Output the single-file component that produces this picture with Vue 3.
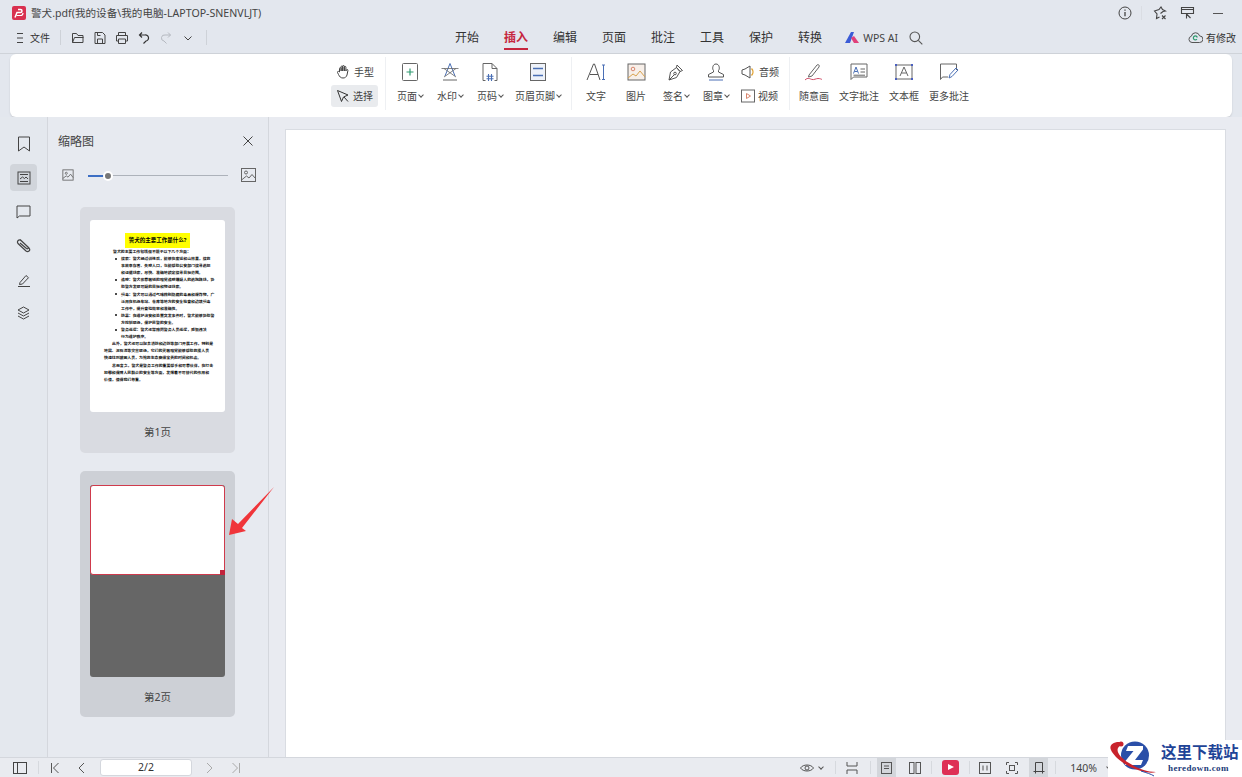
<template>
  <div class="app">
    <!-- 标题栏 -->
    <header class="title-bar">
      <svg class="logo" width="14" height="14" viewBox="0 0 14 14">
        <rect width="14" height="14" rx="2" fill="#d9304f" />
        <path d="M3 11.500L5 6.500h3.500a1.500 1.500 0 0 0 0-3H6" fill="none" stroke="#fff" stroke-width="1.500" />
        <path d="M4.500 9.500h4A2.500 2.500 0 0 0 11 7" fill="none" stroke="#fff" stroke-width="1.200" />
      </svg>
      <span class="file-name">警犬.pdf(我的设备\我的电脑-LAPTOP-SNENVLJT)</span>
      <div class="win-btns">
        <svg width="14" height="14" viewBox="0 0 14 14" fill="none" stroke="#444" stroke-width="1">
          <circle cx="7" cy="7" r="6" />
          <path d="M7 6v4.200M7 3.600v1.200" stroke-width="1.300" />
        </svg>
        <i class="win-sep"></i>
        <svg width="14" height="14" viewBox="0 0 14 14" fill="none" stroke="#444" stroke-width="1.100">
          <path d="M7.500 7.500L10 5.500 12.500 5 9.500 3.500 8 1 6 3.500 1.500 5l2.500 3-.5 4.500 3-1.500" />
          <path d="M9 9.500l3.500 3.500M12.500 9.500L9 13" />
        </svg>
        <svg width="15" height="14" viewBox="0 0 15 14" fill="none" stroke="#444" stroke-width="1.100">
          <path d="M1.500 1.500h12v6h-12zM1.500 3.500h12M6.500 7.500v5M6.500 8l4 4" />
        </svg>
        <svg class="win-min" width="12" height="14" viewBox="0 0 12 14" fill="none" stroke="#555">
          <path d="M1 7.500h10" />
        </svg>
      </div>
    </header>

    <!-- 菜单栏 -->
    <nav class="menu-bar">
      <div class="quick">
        <svg width="8" height="12" viewBox="0 0 8 12" fill="none" stroke="#444"><path d="M1 1.500h6M1 6h6M1 10.500h6" /></svg>
        <span class="file-menu">文件</span>
        <i class="quick-sep"></i>
        <div class="quick-icons">
          <svg width="14" height="14" viewBox="0 0 14 14" fill="none" stroke="#444"><path d="M1.500 11.500v-9h4l1.500 2h5v7zM1.500 11.500l2-5h9" /></svg>
          <svg width="14" height="14" viewBox="0 0 14 14" fill="none" stroke="#444"><path d="M2 1.500h7.500l2.500 2.500v8.500H2zM4.500 12.500V8h5v4.500M4.500 1.500V4.500h3" /></svg>
          <svg width="14" height="14" viewBox="0 0 14 14" fill="none" stroke="#444"><path d="M3.500 4.500v-3h7v3M3.500 10H1.500V4.500h11V10h-2M3.500 8h7v4.500h-7z" /></svg>
          <svg width="14" height="14" viewBox="0 0 14 14" fill="none" stroke="#333" stroke-width="1.200"><path d="M5 1.500L2.500 4 5 6.500M2.500 4H8a3 3 0 0 1 1 6L6.500 12.500" /></svg>
          <svg width="14" height="14" viewBox="0 0 14 14" fill="none" stroke="#b5b9c0"><path d="M9 1.500L11.500 4 9 6.500M11.500 4H6a3 3 0 0 0-1 6l2.500 2.500" /></svg>
          <svg width="14" height="14" viewBox="0 0 14 14" fill="none" stroke="#444"><path d="M3.500 5.500L7 9l3.500-3.500" /></svg>
        </div>
        <i class="quick-sep last"></i>
      </div>
      <div class="tabs">
        <span v-for="t in tabs" :key="t" :class="['tab', { active: t === '插入' }]">{{ t }}</span>
        <span class="wps-ai">
          <svg width="15" height="11" viewBox="0 0 15 11">
            <path d="M0 11L6 0h3L5 11z" fill="#3b5bd6" />
            <path d="M6 6l3-2 5 7H9z" fill="#e0407a" />
          </svg>
          WPS AI
        </span>
        <svg class="search" width="14" height="14" viewBox="0 0 14 14" fill="none" stroke="#555" stroke-width="1.100">
          <circle cx="5.800" cy="5.800" r="4.800" /><path d="M9.300 9.300L13.300 13.300" />
        </svg>
      </div>
      <div class="modified">
        <svg width="15" height="13" viewBox="0 0 15 13" fill="none" stroke="#555">
          <path d="M4 11.500a3.200 3.200 0 0 1-.6-6.300 4.200 4.200 0 0 1 8.200-.3 3.300 3.300 0 0 1 0 6.600z" />
          <path d="M9.300 6.500a2 2 0 1 0-.4 1.700" stroke="#2f9a70" stroke-width="1.200" />
        </svg>
        有修改
      </div>
    </nav>

    <!-- 功能区 -->
    <section class="ribbon">
      <div class="group mode-group">
        <div class="mode">
          <svg width="15" height="15" viewBox="0 0 15 15" fill="none" stroke="#444"><path d="M3.500 8V4.500a.8.8 0 0 1 1.600 0V7V2.800a.8.8 0 0 1 1.600 0V7V2.300a.8.8 0 0 1 1.600 0V7V3.200a.8.8 0 0 1 1.600 0V7l.5-1a.8.8 0 0 1 1.500.6L11 11c-.6 2-2 3-4 3-2.500 0-3.500-1.500-4.500-3.500L1.500 8.500a.8.8 0 0 1 1.300-.9z" /></svg>
          手型
        </div>
        <div class="mode on">
          <svg width="14" height="14" viewBox="0 0 14 14" fill="none" stroke="#333"><path d="M1.500 1.500l4 11 2-4.500 4.500-2zM8 8l4 4.500" /></svg>
          选择
        </div>
      </div>

      <div class="group">
        <div class="tool">
          <svg width="18" height="20" viewBox="0 0 18 20" fill="none" stroke="#666">
            <rect x="1.500" y="1.500" width="15" height="17" rx="1" />
            <path d="M5.500 10h7M9 6.500v7" stroke="#2f9a70" stroke-width="1.200" />
          </svg>
          <span>页面<b class="caret"></b></span>
        </div>
        <div class="tool">
          <svg width="20" height="20" viewBox="0 0 20 20" fill="none" stroke="#4a6fb5">
            <path d="M5 14L10 1.500 15 14" />
            <path d="M1.500 6.500h17M4 15l12-8.500M4 6.500L16 15" stroke="#666" stroke-width=".800" />
            <path d="M3 18h14" stroke="#666" />
          </svg>
          <span>水印<b class="caret"></b></span>
        </div>
        <div class="tool">
          <svg width="18" height="20" viewBox="0 0 18 20" fill="none" stroke="#666">
            <path d="M4.500 18.500H2v-17h9l5 5v12h-2.500M11 1.500v5h5" />
            <path d="M7.500 12v7M10.500 12v7M5.500 14.200h7M5.500 16.800h7" stroke="#4a6fb5" stroke-width="1.100" />
          </svg>
          <span>页码<b class="caret"></b></span>
        </div>
        <div class="tool">
          <svg width="18" height="20" viewBox="0 0 18 20" fill="#eef2f9" stroke="#666">
            <rect x="1.500" y="1.500" width="15" height="17" />
            <path d="M4 6.500h10M4 13.500h10" stroke="#4a6fb5" stroke-width="1.500" />
          </svg>
          <span>页眉页脚<b class="caret"></b></span>
        </div>
      </div>

      <div class="group">
        <div class="tool">
          <svg width="20" height="20" viewBox="0 0 20 20" fill="none" stroke="#555">
            <path d="M1 18L7.500 2h1L14 18M4 12.500h8" />
            <path d="M16 3h3M16 17.500h3M17.500 3v14.500" stroke="#4a6fb5" />
          </svg>
          <span>文字</span>
        </div>
        <div class="tool">
          <svg width="19" height="18" viewBox="0 0 19 18" fill="#f7efe9" stroke="#666">
            <rect x="1" y="1" width="17" height="16" />
            <circle cx="6" cy="6" r="1.800" stroke="#d8866e" />
            <path d="M1 15l5-4 3 2 4-5 5 6" fill="none" stroke="#d8a24e" />
          </svg>
          <span>图片</span>
        </div>
        <div class="tool">
          <svg width="18" height="20" viewBox="0 0 18 20" fill="none" stroke="#555">
            <path d="M2 18l1.500-8L9.500 5.500l3.500 4L9.500 15.500zM2 18l5-5M10 3l5.500 5.500-2.500 1-3.500-4z" />
            <circle cx="8" cy="11.500" r="1.300" />
          </svg>
          <span>签名<b class="caret"></b></span>
        </div>
        <div class="tool">
          <svg width="18" height="20" viewBox="0 0 18 20" fill="none" stroke="#555">
            <path d="M6.500 10V8.500C5 7 5.500 2 9 2s4 5 2.500 6.500V10l5 2.500V15h-15v-2.500z" />
            <path d="M2 18h14" stroke="#4a6fb5" />
          </svg>
          <span>图章<b class="caret"></b></span>
        </div>
        <div class="media">
          <div class="media-row">
            <svg width="15" height="14" viewBox="0 0 15 14" fill="none" stroke="#555">
              <path d="M1 5l3-1 5-3v12L4 10 1 9z" />
              <path d="M10.500 3.500a5 5 0 0 1 0 7" stroke="#e0a030" stroke-width="1.400" />
            </svg>
            音频
          </div>
          <div class="media-row">
            <svg width="14" height="14" viewBox="0 0 14 14" fill="none" stroke="#666">
              <rect x=".5" y="1" width="13" height="12" />
              <path d="M5.500 4.500l4 2.500-4 2.500z" stroke="#d8866e" />
            </svg>
            视频
          </div>
        </div>
      </div>

      <div class="group">
        <div class="tool">
          <svg width="20" height="20" viewBox="0 0 20 20" fill="none" stroke="#666">
            <path d="M5 13L13 3c1-1 3 0 2 2L8 14l-3.500 1z" />
            <path d="M1 18c3-3 5-1 7-.5s4-1 6-1 3 .5 4 1" stroke="#d0506a" />
          </svg>
          <span>随意画</span>
        </div>
        <div class="tool">
          <svg width="18" height="18" viewBox="0 0 18 18" fill="none" stroke="#666">
            <path d="M1 1h16v13H3.500L1 16.500z" />
            <path d="M3.500 10.500L6 4l2.500 6.500M4.500 8.500h3" stroke="#4a6fb5" />
            <path d="M10.500 6H15M10.500 9H15M3.500 12.200H15" />
          </svg>
          <span>文字批注</span>
        </div>
        <div class="tool">
          <svg width="20" height="18" viewBox="0 0 20 18" fill="none" stroke="#666">
            <rect x="2" y="2" width="16" height="14" />
            <path d="M6 13L10 4l4 9M7.500 10h5" />
            <path d="M2 1v2M18 1v2M2 15v2M18 15v2" stroke="#4a5fc0" stroke-width="2" />
          </svg>
          <span>文本框</span>
        </div>
        <div class="tool">
          <svg width="20" height="18" viewBox="0 0 20 18" fill="none" stroke="#666">
            <path d="M9 14H3.500L1.500 16.500V1h16v6" />
            <path d="M10 15l1-3.500 6-6.500 2 2-6 6.500z" stroke="#4a6fb5" />
          </svg>
          <span>更多批注</span>
        </div>
      </div>
    </section>

    <main class="main">
      <!-- 左侧竖排 -->
      <aside class="rail">
        <div class="rail-btn">
          <svg width="14" height="16" viewBox="0 0 14 16" fill="none" stroke="#444"><path d="M1.500 1h11v14L7 11l-5.500 4z" /></svg>
        </div>
        <div class="rail-btn on">
          <svg width="14" height="14" viewBox="0 0 14 14" fill="none" stroke="#444">
            <rect x="1" y="1" width="12" height="12" />
            <path d="M3 3.500h8M3 10.500h8M3 8l2.500-2 2 1.500L9 6l2 2" />
          </svg>
        </div>
        <div class="rail-btn">
          <svg width="15" height="14" viewBox="0 0 15 14" fill="none" stroke="#444"><path d="M1 1h13v10H3.500L1 13z" /></svg>
        </div>
        <div class="rail-btn">
          <svg width="15" height="15" viewBox="0 0 15 15" fill="none" stroke="#444" stroke-width="1.200"><path d="M4 1.500l9 8.500c2 2.500-1 4.500-3 3L2 5.500C.5 3.500 3 .5 5 2.500l7 6.500c1 1.200-.5 2.200-1.500 1.500L4 5" /></svg>
        </div>
        <div class="rail-btn">
          <svg width="14" height="14" viewBox="0 0 14 14" fill="none" stroke="#444"><path d="M3 9.500L9 2.500l2.500 2.200L5.500 11l-3 .5zM1 13.500h12" /></svg>
        </div>
        <div class="rail-btn">
          <svg width="13" height="15" viewBox="0 0 13 15" fill="none" stroke="#444"><path d="M6.500 1L12 4 6.500 7 1 4zM1 7l5.500 3L12 7M1 10l5.500 3L12 10" /></svg>
        </div>
      </aside>

      <!-- 缩略图面板 -->
      <aside class="panel">
        <div class="panel-head">
          <span>缩略图</span>
          <svg width="10" height="10" viewBox="0 0 10 10" fill="none" stroke="#444"><path d="M.5.5l9 9M9.500.5l-9 9" /></svg>
        </div>
        <div class="zoom-row">
          <svg width="12" height="12" viewBox="0 0 14 14" fill="none" stroke="#666">
            <rect x="1" y="1" width="12" height="12" /><circle cx="5" cy="5" r="1.200" /><path d="M1 11l4-3 2 1.500L10 6l3 4" />
          </svg>
          <div class="track">
            <div class="track-fill"></div>
            <div class="knob"></div>
          </div>
          <svg width="15" height="14" viewBox="0 0 15 14" fill="none" stroke="#666">
            <rect x=".5" y=".5" width="14" height="13" /><circle cx="5" cy="4.500" r="1.500" /><path d="M.5 12l5-4 2.500 2 3-3.500 3.500 4" />
          </svg>
        </div>

        <div class="thumb">
          <div class="sheet">
            <div class="doc-title"><mark>警犬的主要工作是什么?</mark></div>
            <p v-for="(l, i) in docLines" :key="i" :class="['doc-line', l.k]">{{ l.t }}</p>
          </div>
          <div class="thumb-label">第1页</div>
        </div>

        <div class="thumb current">
          <div class="sheet blank">
            <div class="viewport"><i class="grip"></i></div>
          </div>
          <div class="thumb-label">第2页</div>
        </div>
      </aside>

      <!-- 文档区 -->
      <div class="doc-area">
        <div class="page"></div>
      </div>

      <!-- 标注箭头 -->
      <svg class="arrow" width="50" height="50" viewBox="0 0 50 50">
        <path d="M1 49L4 33l6 5 36-37-32 41 4 3z" fill="#f0353a" />
      </svg>
    </main>

    <!-- 状态栏 -->
    <footer class="status">
      <div class="st-left">
        <svg width="14" height="12" viewBox="0 0 14 12" fill="none" stroke="#444"><rect x=".5" y=".5" width="13" height="11" /><path d="M4.500 .5v11" /></svg>
        <i class="st-sep"></i>
        <svg class="pg-first" width="10" height="12" viewBox="0 0 10 12" fill="none" stroke="#555"><path d="M1.500 1v10M8.500 1l-5 5 5 5" /></svg>
        <svg class="pg-prev" width="7" height="12" viewBox="0 0 7 12" fill="none" stroke="#555"><path d="M6 1L1 6l5 5" /></svg>
        <div class="pg-input">2/2</div>
        <svg class="pg-next" width="7" height="12" viewBox="0 0 7 12" fill="none" stroke="#aaa"><path d="M1 1l5 5-5 5" /></svg>
        <svg class="pg-last" width="10" height="12" viewBox="0 0 10 12" fill="none" stroke="#aaa"><path d="M8.500 1v10M1.500 1l5 5-5 5" /></svg>
      </div>
      <div class="st-right">
        <svg width="14" height="10" viewBox="0 0 14 10" fill="none" stroke="#555"><path d="M.5 5C3 1 11 1 13.500 5 11 9 3 9 .5 5z" /><circle cx="7" cy="5" r="2" /></svg>
        <b class="caret dark"></b>
        <i class="st-sep fit-l"></i>
        <svg width="12" height="14" viewBox="0 0 12 14" fill="none" stroke="#555"><path d="M1 1v4h10V1M1 13V9h10v4" /></svg>
        <i class="st-sep fit-r"></i>
        <span class="st-btn on"><svg width="11" height="12" viewBox="0 0 11 12" fill="none" stroke="#555"><rect x=".5" y=".5" width="10" height="11" /><path d="M3 4h5M3 6.500h5" /></svg></span>
        <span class="st-btn two"><svg width="12" height="12" viewBox="0 0 12 12" fill="none" stroke="#555"><rect x=".5" y=".5" width="4.500" height="11" /><rect x="7" y=".5" width="4.500" height="11" /></svg></span>
        <i class="st-sep"></i>
        <span class="play"></span>
        <i class="st-sep after-play"></i>
        <span class="st-btn"><svg width="12" height="12" viewBox="0 0 12 12" fill="none" stroke="#555"><rect x=".5" y=".5" width="11" height="11" /><path d="M4 3.500v5M8 3.500v5" /></svg></span>
        <span class="st-btn"><svg width="12" height="12" viewBox="0 0 12 12" fill="none" stroke="#555"><path d="M.5 3V.5H3M9 .5h2.500V3M11.500 9v2.500H9M3 11.500H.5V9" /><rect x="3.500" y="3.500" width="5" height="5" /></svg></span>
        <span class="st-btn on"><svg width="12" height="12" viewBox="0 0 12 12" fill="none" stroke="#444"><path d="M2.500 9V.5h7V9M.5 9.500h11M2.500 9.500v2M9.500 9.500v2" /></svg></span>
        <i class="st-sep"></i>
        <span class="zoom-val">140%</span>
        <b class="caret zoom-caret"></b>
      </div>
    </footer>

    <!-- 水印 -->
    <div class="stamp">
      <svg width="54" height="37" viewBox="0 0 54 37">
        <circle cx="27" cy="15.500" r="14" fill="#2a4fa8" />
        <path d="M20 6h15v3.500L27 20h8l-2 5H17v-3.500L25.500 11H18z" fill="#fff" />
        <path d="M11 2C4 2 1 6 3 10c3 7 15 17 30 21 7 2 12 2 15 1-8 0-18-3-27-9C13 18 8 12 10 8c1-2 3-3 5-3z" fill="#c8232c" />
        <circle cx="13" cy="4" r="2.500" fill="#c8232c" />
        <path d="M33 31c6 2 10 3 13 5" fill="none" stroke="#2a4fa8" />
      </svg>
      <div class="stamp-text">
        <div class="stamp-cn">这里下载站</div>
        <div class="stamp-en">heredown.com</div>
      </div>
    </div>
  </div>
</template>

<script setup>
const tabs = ['开始', '插入', '编辑', '页面', '批注', '工具', '保护', '转换']

// 第1页缩略图里的正文
const docLines = [
  { k: 'lead', t: '警犬的主要工作包括但不限于以下几个方面：' },
  { k: 'dot', t: '搜索：警犬经过训练后，能够在废墟和山林里，搜救' },
  { k: 'sub', t: '事故幸存者、失踪人口，也能帮助公安部门搜寻逃犯' },
  { k: 'sub', t: '和证据线索，尽快、准确地锁定搜寻目标范围。' },
  { k: 'dot', t: '追踪：警犬依靠敏锐的嗅觉追踪嫌疑人的逃跑路线，协' },
  { k: 'sub', t: '助警方发现可疑的目标和物证线索。' },
  { k: 'dot', t: '缉毒：警犬可以通过气味辨别隐藏的毒品和爆炸物，广' },
  { k: 'sub', t: '泛用在机场车站、仓库等地方的安全检查和边境缉毒' },
  { k: 'sub', t: '工作中，提升查验效率和准确性。' },
  { k: 'dot', t: '防暴：在维护治安和处置突发事件时，警犬能够协助警' },
  { k: 'sub', t: '方控制现场，保护民警的安全。' },
  { k: 'dot', t: '警务巡逻：警犬还常陪同警务人员巡逻，威慑违法' },
  { k: 'sub', t: '行为维护秩序。' },
  { k: 'para', t: '此外，警犬还可以配合消防和边防等部门开展工作，特别是' },
  { k: 'flush', t: '地震、泥石流等灾害现场，它们的灵敏嗅觉能够帮助救援人员' },
  { k: 'flush', t: '快速找到被困人员，为抢救生命赢得宝贵的时间和机会。' },
  { k: 'para', t: '总而言之，警犬是警务工作的重要帮手和可靠伙伴，在打击' },
  { k: 'flush', t: '犯罪和保障人民群众的安全等方面，发挥着不可替代的作用和' },
  { k: 'flush', t: '价值，值得我们尊重。' },
]
</script>

<style>
html,
body {
  margin: 0;
  overflow: hidden;
}
</style>

<style scoped>
.app {
  position: relative;
  display: flex;
  flex-direction: column;
  width: 1242px;
  height: 777px;
  overflow: hidden;
  background: #e3e7ee;
  color: #333;
  font-family: 'Noto Sans', 'Noto Sans CJK SC', sans-serif;
  font-size: 10px;
}
svg {
  display: block;
  flex: none;
}
.title-bar {
  display: flex;
  align-items: center;
  height: 25px;
  padding-left: 12px;
}
.file-name {
  margin-left: 5px;
  font-size: 10.600px;
  color: #444;
}
.win-btns {
  display: flex;
  align-items: center;
  gap: 13px;
  margin-left: auto;
  padding-right: 18px;
}
.win-sep {
  width: 1px;
  height: 14px;
  background: #dadde3;
  margin: 0 -2px 0 -4px;
}
.win-min {
  margin-left: 4px;
}
.menu-bar {
  display: flex;
  align-items: center;
  height: 29px;
  padding-bottom: 3px;
  box-sizing: border-box;
  border-bottom: 1px solid #cfd3d9;
}
.quick {
  display: flex;
  align-items: center;
  width: 455px;
  padding-left: 16px;
  box-sizing: border-box;
}
.file-menu {
  margin-left: 6px;
  font-size: 10px;
}
.quick-sep {
  width: 1px;
  height: 15px;
  background: #ced2d8;
  margin: 0 10px;
}
.quick-sep.last {
  margin-left: 11px;
}
.quick-icons {
  display: flex;
  gap: 8px;
}
.tabs {
  display: flex;
  align-items: center;
  gap: 25px;
}
.tab {
  position: relative;
  font-size: 12px;
  line-height: 24px;
  color: #333;
}
.tab.active {
  color: #c6263e;
  font-weight: 700;
}
.tab.active::after {
  content: '';
  position: absolute;
  left: 0;
  right: 0;
  bottom: 0;
  height: 2px;
  background: #c6263e;
}
.wps-ai {
  display: flex;
  align-items: center;
  gap: 3px;
  margin-left: -2px;
  font-size: 10.500px;
  color: #444;
}
.search {
  margin-left: -14px;
}
.modified {
  display: flex;
  align-items: center;
  gap: 3px;
  margin-left: auto;
  padding-right: 6px;
  font-size: 10px;
}
.ribbon {
  display: flex;
  height: 63px;
  margin: 0 10px;
  padding: 3px 0 0 321px;
  box-sizing: border-box;
  background: #fff;
  border-radius: 6px;
  box-shadow: 0 1px 2px rgba(0, 0, 0, 0.12);
}
.group {
  display: flex;
  gap: 10px;
  height: 53px;
  padding: 0 10px 0 9px;
  border-left: 1px solid #eef0f3;
}
.mode-group {
  flex-direction: column;
  justify-content: center;
  gap: 2px;
  padding: 0 7px 0 0;
  border-left: none;
}
.mode {
  display: flex;
  align-items: center;
  gap: 3px;
  height: 22px;
  padding: 0 4px 0 5px;
  border-radius: 3px;
  font-size: 10px;
  color: #444;
}
.mode.on {
  background: #e9ebee;
}
.tool {
  display: flex;
  flex-direction: column;
  align-items: center;
  min-width: 30px;
}
.tool svg {
  height: 20px;
  margin-top: 5px;
}
.tool span {
  display: flex;
  align-items: center;
  margin-top: 4px;
  line-height: 20px;
  font-size: 10px;
  color: #444;
  white-space: nowrap;
}
.caret {
  display: inline-block;
  width: 3px;
  height: 3px;
  margin: -2px 0 0 2px;
  border-right: 1px solid #555;
  border-bottom: 1px solid #555;
  transform: rotate(45deg);
}
.media {
  display: flex;
  flex-direction: column;
  justify-content: center;
  gap: 4px;
}
.media-row {
  display: flex;
  align-items: center;
  gap: 3px;
  height: 20px;
  font-size: 10px;
  color: #444;
}
.main {
  position: relative;
  display: flex;
  flex: 1;
  min-height: 0;
}
.rail {
  display: flex;
  flex-direction: column;
  align-items: center;
  gap: 7px;
  width: 47px;
  padding-top: 13px;
  border-right: 1px solid #d4d7dd;
  background: #e4e8ee;
}
.rail-btn {
  display: flex;
  align-items: center;
  justify-content: center;
  width: 27px;
  height: 27px;
  border-radius: 4px;
}
.rail-btn.on {
  background: #d1d5db;
}
.panel {
  width: 220px;
  border-right: 1px solid #d4d7dd;
  background: #e7eaf0;
  overflow: hidden;
}
.panel-head {
  display: flex;
  align-items: center;
  justify-content: space-between;
  height: 24px;
  padding: 12px 15px 0 10px;
  font-size: 12px;
  color: #444;
}
.zoom-row {
  display: flex;
  align-items: center;
  height: 20px;
  padding: 12px 0 0 14px;
}
.track {
  position: relative;
  width: 140px;
  height: 1px;
  margin: 0 13px 0 14px;
  background: #adb2ba;
}
.track-fill {
  width: 20px;
  height: 2px;
  background: #3d6fc4;
}
.knob {
  position: absolute;
  left: 15px;
  top: -4px;
  width: 6px;
  height: 6px;
  border: 2px solid #fff;
  border-radius: 50%;
  background: #777;
}
.thumb {
  width: 155px;
  height: 246px;
  margin: 22px 0 0 32px;
  padding-top: 13px;
  box-sizing: border-box;
  border-radius: 5px;
  background: #d9dbe1;
}
.thumb.current {
  margin-top: 18px;
  padding-top: 14px;
  background: #cdd0d6;
}
.sheet {
  width: 135px;
  height: 192px;
  margin-left: 10px;
  padding-top: 13px;
  box-sizing: border-box;
  border-radius: 3px;
  background: #fff;
  overflow: hidden;
}
.doc-title {
  text-align: center;
  font-size: 5.500px;
  line-height: 15px;
  font-weight: 700;
  color: #111;
}
.doc-title mark {
  display: inline-block;
  padding: 0 4px;
  background: #ffff00;
}
.doc-line {
  position: relative;
  margin: 0;
  height: 7.100px;
  line-height: 7.100px;
  font-size: 3.900px;
  font-weight: 700;
  color: #111;
  white-space: nowrap;
  overflow: hidden;
}
.lead {
  padding-left: 23px;
}
.dot,
.sub {
  padding-left: 31px;
}
.dot::before {
  content: '';
  position: absolute;
  left: 25px;
  top: 2.500px;
  width: 2px;
  height: 2px;
  border-radius: 50%;
  background: #111;
}
.para {
  padding-left: 22px;
}
.flush {
  padding-left: 14px;
}
.blank {
  padding-top: 0;
  background: #666;
}
.viewport {
  position: relative;
  height: 90px;
  box-sizing: border-box;
  background: #fff;
  border: 1px solid #cf3a4c;
  border-radius: 3px;
}
.grip {
  position: absolute;
  right: -1px;
  bottom: -1px;
  width: 5px;
  height: 5px;
  background: #c2243c;
}
.thumb-label {
  margin-top: 12px;
  text-align: center;
  font-size: 10.500px;
  line-height: 16px;
  color: #444;
}
.doc-area {
  flex: 1;
  padding: 12px 16px 0;
  background: #e9ebf1;
  overflow: hidden;
}
.page {
  height: 640px;
  background: #fff;
  border: 1px solid #d9dce2;
  box-sizing: border-box;
}
.arrow {
  position: absolute;
  left: 228px;
  top: 369px;
}
.status {
  display: flex;
  align-items: center;
  justify-content: space-between;
  height: 20px;
  flex: none;
  background: #e9ebf0;
  border-top: 1px solid #d4d7dd;
  box-sizing: border-box;
  font-size: 10.500px;
}
.st-left,
.st-right {
  display: flex;
  align-items: center;
}
.st-left {
  padding-left: 13px;
}
.st-sep {
  width: 1px;
  height: 13px;
  margin: 0 3px;
  background: #d6d9de;
}
.st-sep.fit-l {
  margin: 0 10px 0 12px;
}
.st-sep.fit-r {
  margin: 0 2px 0 12px;
}
.st-sep.after-play {
  margin-right: 1px;
}
.st-left .st-sep {
  margin: 0 0 0 11px;
}
.pg-first {
  margin-left: 11px;
}
.pg-prev {
  margin-left: 18px;
}
.pg-input {
  width: 92px;
  height: 17px;
  margin-left: 15px;
  border: 1px solid #d4d7dd;
  border-radius: 3px;
  box-sizing: border-box;
  background: #fff;
  text-align: center;
  line-height: 15px;
  font-size: 10.500px;
}
.pg-next {
  margin-left: 14px;
}
.pg-last {
  margin-left: 18px;
}
.st-right {
  padding-right: 131px;
}
.caret.dark {
  margin-left: 5px;
}
.st-btn {
  display: flex;
  align-items: center;
  justify-content: center;
  width: 19px;
  height: 19px;
  margin: 0 4px;
}
.st-btn.on {
  background: #d3d6db;
}
.st-btn.two {
  margin-left: 5px;
}
.play {
  position: relative;
  width: 17px;
  height: 15px;
  margin: 0 7px;
  border-radius: 3px;
  background: #de2f55;
}
.play::after {
  content: '';
  position: absolute;
  left: 6px;
  top: 4px;
  border-left: 6px solid #fff;
  border-top: 3.500px solid transparent;
  border-bottom: 3.500px solid transparent;
}
.zoom-val {
  margin-left: 11px;
  color: #444;
}
.zoom-caret {
  margin-left: 10px;
}
.stamp {
  position: absolute;
  right: 0;
  bottom: 0;
  display: flex;
  align-items: center;
  width: 134px;
  height: 37px;
  background: #fff;
}
.stamp-text {
  margin-left: -1px;
  font-family: 'Liberation Serif', 'Noto Sans CJK SC', serif;
  font-weight: 700;
  color: #1f4497;
}
.stamp-cn {
  font-size: 15.500px;
  line-height: 18px;
  white-space: nowrap;
}
.stamp-en {
  margin-left: 7px;
  font-size: 9px;
  line-height: 12px;
  letter-spacing: 0.4px;
  color: #1b3a78;
}
</style>
